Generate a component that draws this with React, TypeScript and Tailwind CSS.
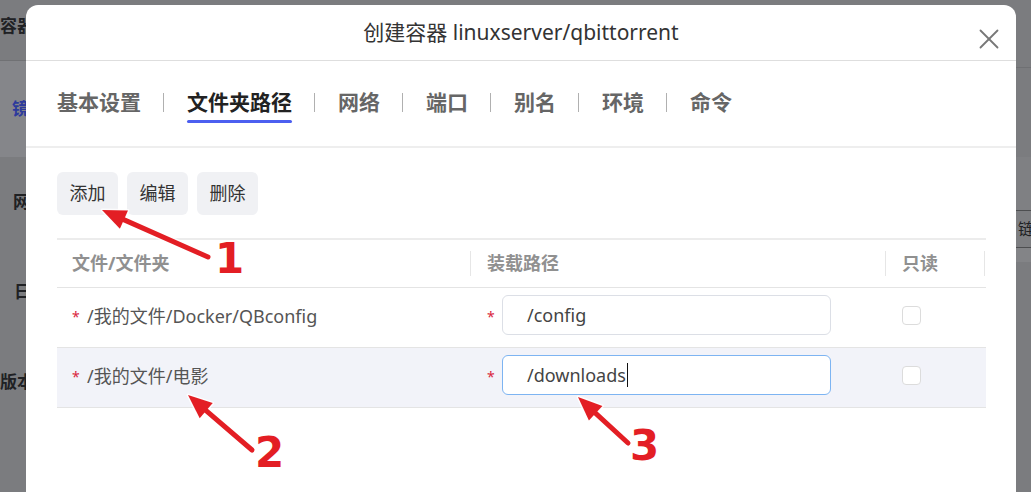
import { X } from "lucide-react";

const tabs = ["基本设置", "文件夹路径", "网络", "端口", "别名", "环境", "命令"];

const rows = [
  { src: "/我的文件/Docker/QBconfig", dst: "/config", focused: false },
  { src: "/我的文件/电影", dst: "/downloads", focused: true },
];

function Arrow({ x1, y1, x2, y2 }: { x1: number; y1: number; x2: number; y2: number }) {
  const dx = x2 - x1;
  const dy = y2 - y1;
  const len = Math.hypot(dx, dy);
  const ux = dx / len;
  const uy = dy / len;
  const head = 24;
  const half = 10;
  const bx = x2 - ux * head;
  const by = y2 - uy * head;
  const pts = `${x2},${y2} ${bx - uy * half},${by + ux * half} ${bx + uy * half},${by - ux * half}`;
  return (
    <g>
      <line x1={x1} y1={y1} x2={bx + ux * 4} y2={by + uy * 4} stroke="#fff" strokeOpacity={0.8} strokeWidth={8} strokeLinecap="round" />
      <polygon points={pts} fill="#fff" fillOpacity={0.8} stroke="#fff" strokeOpacity={0.8} strokeWidth={3} strokeLinejoin="round" />
      <line x1={x1} y1={y1} x2={bx + ux * 4} y2={by + uy * 4} stroke="#e31e24" strokeWidth={5} strokeLinecap="round" />
      <polygon points={pts} fill="#e31e24" />
    </g>
  );
}

function Num({ n, className }: { n: string; className: string }) {
  return (
    <span
      className={`absolute font-['DejaVu_Sans',sans-serif] text-[42px] font-bold leading-none text-[#e31e24] [text-shadow:0_0_2px_#fff,0_0_3px_#fff] ${className}`}
    >
      {n}
    </span>
  );
}

export default function App() {
  return (
    <div className="relative h-[492px] w-[1031px] overflow-hidden bg-[#7b7c7f] font-['Noto_Sans','Noto_Sans_CJK_SC',sans-serif]">
      {/* dimmed page behind the dialog */}
      <div className="flex h-full justify-between">
        <div className="flex w-[26px] flex-col text-[17px] font-bold text-[#202124] whitespace-nowrap">
          <div className="flex h-[61px] items-center border-b border-[#707174] pb-[8px]">容器管理</div>
          <div className="flex h-[96px] items-center bg-[#85868a] pl-[12px] text-[#2d3a9c]">镜像</div>
          <div className="flex h-[90px] items-center pl-[13px]">网络</div>
          <div className="flex h-[90px] items-center pl-[14px]">日志</div>
          <div className="flex h-[90px] items-center">版本</div>
        </div>
        <div className="flex w-[15px] flex-col text-[16px] text-[#202124] whitespace-nowrap">
          <div className="h-[68px] border-b border-[#6f7073]" />
          <div className="h-[89px]" />
          <div className="h-[53px] bg-[#7f8083]" />
          <div className="flex h-[38px] items-center border-y border-[#4d4e50] bg-[#7d7e81] pl-[2px]">链接</div>
          <div className="h-[14px] bg-[#838487]" />
        </div>
      </div>

      {/* dialog */}
      <div className="absolute left-[26px] top-[5px] h-[510px] w-[990px] rounded-[12px] bg-white">
        <div className="relative flex h-[56px] items-center justify-center border-b border-[#dedede] pt-px text-[21px] text-[#333]">
          创建容器 linuxserver/qbittorrent
          <X className="absolute right-[10px] top-[17px] h-[34px] w-[34px] text-[#777]" strokeWidth={1.3} />
        </div>

        <div className="flex border-b-2 border-[#eeeeee] pb-[23px] pl-[31px] pt-[27px]">
          {tabs.map((t, i) => (
            <div key={t} className="flex">
              {i > 0 && <div className="ml-[22px] mr-[23px] mt-[5px] h-[19px] w-px bg-[#b0b0b0]" />}
              <div className="flex flex-col">
                <span
                  className={`text-[21px] font-bold leading-[28px] ${i === 1 ? "text-[#222]" : "text-[#666]"}`}
                >
                  {t}
                </span>
                <div className={`mt-[4px] h-[3px] rounded-full ${i === 1 ? "bg-[#4c5ff0]" : "bg-transparent"}`} />
              </div>
            </div>
          ))}
        </div>

        <div className="px-[31px] pt-[24px]">
          <div className="flex gap-[9px]">
            {["添加", "编辑", "删除"].map((b) => (
              <button
                key={b}
                className="flex h-[43px] w-[61px] items-center justify-center rounded-[6px] bg-[#f0f1f4] text-[18px] text-[#333]"
              >
                {b}
              </button>
            ))}
          </div>

          <div className="mt-[23px] w-[929px] border-t-2 border-[#ececec]">
            <div className="grid h-[47px] grid-cols-[413px_415px_101px] items-center text-[18px] font-bold text-[#909090]">
              <div className="pl-[15px]">文件/文件夹</div>
              <div className="flex items-center">
                <div className="h-[25px] w-px bg-[#e6e6e6]" />
                <span className="ml-[16px]">装载路径</span>
              </div>
              <div className="flex items-center">
                <div className="h-[25px] w-px bg-[#e6e6e6]" />
                <span className="ml-[16px]">只读</span>
                <div className="ml-auto mr-px h-[25px] w-px bg-[#e6e6e6]" />
              </div>
            </div>

            {rows.map((r, i) => (
              <div
                key={r.dst}
                className={`grid grid-cols-[413px_415px_101px] items-center border-t border-[#e4e4e4] text-[18px] text-[#555] ${
                  i === 1 ? "h-[61px] border-b bg-[#f2f3f9]" : "h-[60px]"
                }`}
              >
                <div className="flex items-center pl-[15px]">
                  <span className="mb-[3px] w-[15px] text-[14px] text-[#d9263c]">*</span>
                  <span className="mb-[3px]">{r.src}</span>
                </div>
                <div className="flex items-center pl-[17px]">
                  <span className="mb-[3px] w-[15px] text-[14px] text-[#d9263c]">*</span>
                  <div
                    className={`mb-[5px] flex h-[40px] w-[329px] items-center rounded-[6px] border bg-white pl-[24px] text-[#444] ${
                      r.focused ? "border-[#7db4f2]" : "border-[#dcdfe6]"
                    }`}
                  >
                    {r.dst}
                    {r.focused && <span className="ml-px h-[24px] w-px bg-[#111]" />}
                  </div>
                </div>
                <div className="pl-[17px]">
                  <div className="mb-[4px] h-[19px] w-[19px] rounded-[4px] border border-[#dcdcdc] bg-white" />
                </div>
              </div>
            ))}
          </div>
        </div>
      </div>

      {/* annotation arrows */}
      <svg className="pointer-events-none absolute inset-0" width={1031} height={492}>
        <Arrow x1={208} y1={257} x2={102} y2={210} />
        <Arrow x1={252} y1={450} x2={188} y2={395} />
        <Arrow x1={628} y1={443} x2={578} y2={397} />
      </svg>
      <Num n="1" className="left-[215px] top-[238px]" />
      <Num n="2" className="left-[255px] top-[432px]" />
      <Num n="3" className="left-[630px] top-[425px]" />
    </div>
  );
}
